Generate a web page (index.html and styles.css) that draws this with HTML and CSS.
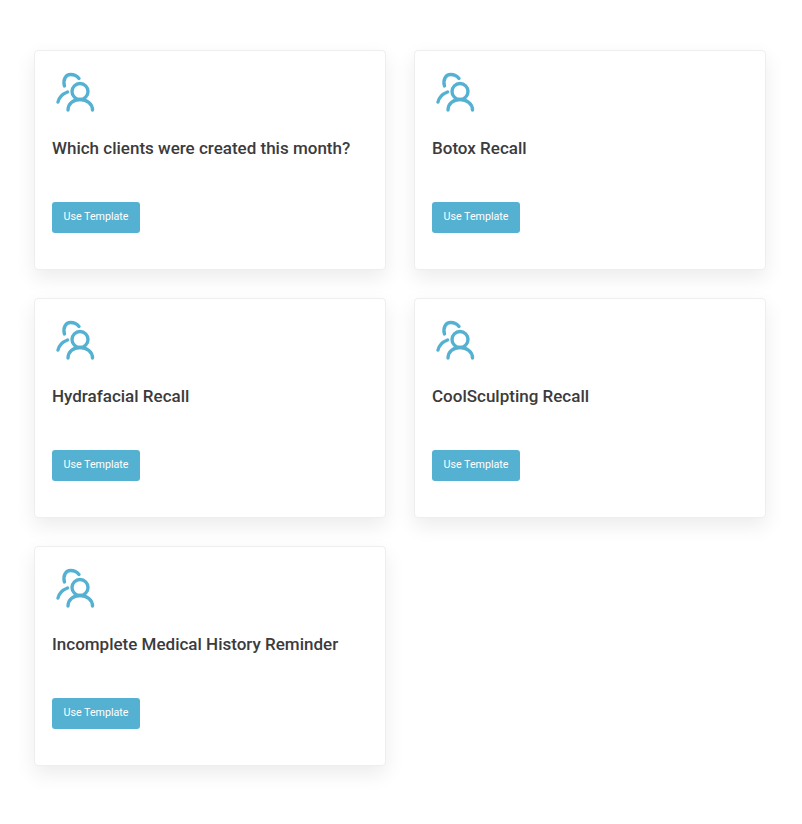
FILE: index.html
```html
<!DOCTYPE html>
<html lang="en">
<head>
  <meta charset="UTF-8">
  <title>Templates</title>
  <link rel="stylesheet" href="styles.css">
</head>
<body>

<svg class="sprite" width="0" height="0">
  <symbol id="clients" viewBox="0 0 40 40">
    <circle cx="24" cy="19.500" r="8" />
    <path d="M12 38C12 32 17 27.500 24 27.500S36.500 32 36.500 38" />
    <path d="M8.500 14C6.500 7.500 10 2.500 14.500 2.500C18 2.500 21 3.800 23 6.500" />
    <path d="M2 30C3 25.500 6.500 22 11.500 20" />
  </symbol>
</svg>

<div class="grid">
  <div class="card">
    <svg class="icon"><use href="#clients"></use></svg>
    <h3>Which clients were created this month?</h3>
    <button>Use Template</button>
  </div>
  <div class="card">
    <svg class="icon"><use href="#clients"></use></svg>
    <h3>Botox Recall</h3>
    <button>Use Template</button>
  </div>
  <div class="card">
    <svg class="icon"><use href="#clients"></use></svg>
    <h3>Hydrafacial Recall</h3>
    <button>Use Template</button>
  </div>
  <div class="card">
    <svg class="icon"><use href="#clients"></use></svg>
    <h3>CoolSculpting Recall</h3>
    <button>Use Template</button>
  </div>
  <div class="card">
    <svg class="icon"><use href="#clients"></use></svg>
    <h3>Incomplete Medical History Reminder</h3>
    <button>Use Template</button>
  </div>
</div>

</body>
</html>
```

FILE: styles.css
```css
body {
  margin: 0;
  font-family: Roboto, sans-serif;
  background-color: white;
  color: #3b3b3d;
}

.sprite {
  display: block;
}

.grid {
  display: grid;
  grid-template-columns: 352px 352px;
  gap: 28px;
  padding: 50px 0 58px 34px;
}

.card {
  height: 220px;
  box-sizing: border-box;
  background: white;
  border: 1px solid #eeeeee;
  border-radius: 4px;
  box-shadow: 0 8px 20px rgba(0, 0, 0, 0.08);
  padding: 21px 17px 0;
}

.icon {
  display: block;
  width: 40px;
  height: 40px;
  margin-left: 4px;
  fill: none;
  stroke: #54b1d2;
  stroke-width: 3.400;
  stroke-linecap: round;
}

h3 {
  margin: 24px 0 0;
  font-size: 17px;
  line-height: 24px;
  font-weight: 500;
}

button {
  display: block;
  width: 88px;
  height: 31px;
  margin-top: 42px;
  padding: 0 0 2px;
  border: none;
  border-radius: 3px;
  background-color: #54b1d2;
  color: white;
  font-family: Roboto, sans-serif;
  font-size: 10.700px;
  font-weight: 400;
}
```
